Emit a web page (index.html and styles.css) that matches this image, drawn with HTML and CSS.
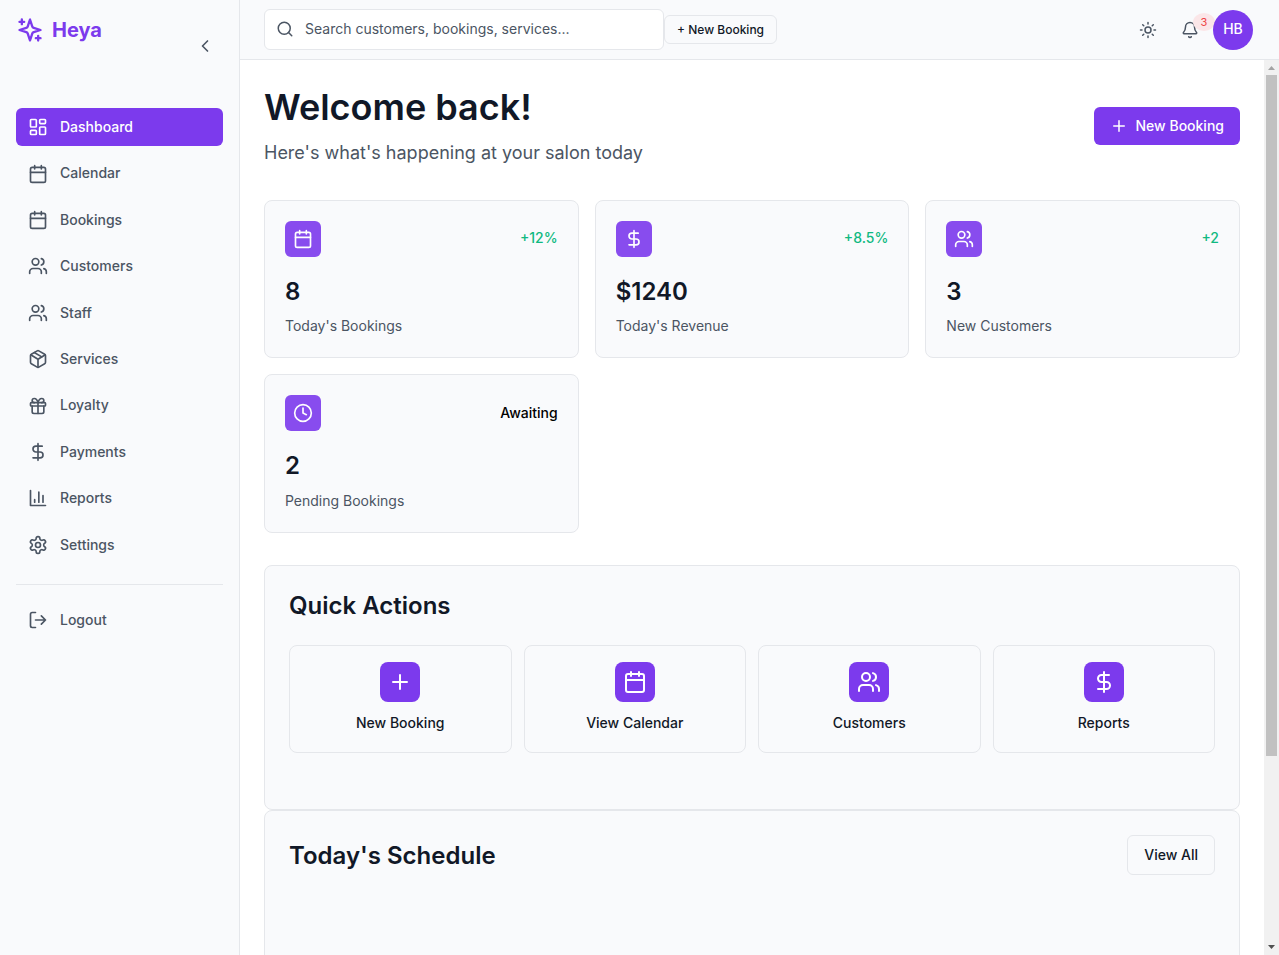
FILE: index.html
```
<!DOCTYPE html>
<html lang="en">
<head>
<meta charset="utf-8">
<title>Heya - Dashboard</title>
<link rel="stylesheet" href="styles.css">
</head>
<body>
<svg class="sprite" aria-hidden="true">
  <symbol id="sparkles" viewBox="0 0 24 24"><path d="m12 3-1.912 5.813a2 2 0 0 1-1.275 1.275L3 12l5.813 1.912a2 2 0 0 1 1.275 1.275L12 21l1.912-5.813a2 2 0 0 1 1.275-1.275L21 12l-5.813-1.912a2 2 0 0 1-1.275-1.275L12 3Z"/><path d="M5 3v4M19 17v4M3 5h4M17 19h4"/></symbol>
  <symbol id="chevron" viewBox="0 0 24 24"><path d="m15 18-6-6 6-6"/></symbol>
  <symbol id="dashboard" viewBox="0 0 24 24"><rect width="7" height="9" x="3" y="3" rx="1"/><rect width="7" height="5" x="14" y="3" rx="1"/><rect width="7" height="9" x="14" y="12" rx="1"/><rect width="7" height="5" x="3" y="16" rx="1"/></symbol>
  <symbol id="calendar" viewBox="0 0 24 24"><path d="M8 2v4M16 2v4"/><rect width="18" height="18" x="3" y="4" rx="2"/><path d="M3 10h18"/></symbol>
  <symbol id="users" viewBox="0 0 24 24"><path d="M16 21v-2a4 4 0 0 0-4-4H6a4 4 0 0 0-4 4v2"/><circle cx="9" cy="7" r="4"/><path d="M22 21v-2a4 4 0 0 0-3-3.87M16 3.13a4 4 0 0 1 0 7.75"/></symbol>
  <symbol id="package" viewBox="0 0 24 24"><path d="M11 21.73a2 2 0 0 0 2 0l7-4A2 2 0 0 0 21 16V8a2 2 0 0 0-1-1.73l-7-4a2 2 0 0 0-2 0l-7 4A2 2 0 0 0 3 8v8a2 2 0 0 0 1 1.73z"/><path d="M12 22V12"/><path d="m3.3 7 7.703 4.734a2 2 0 0 0 1.994 0L20.7 7"/><path d="m7.5 4.27 9 5.15"/></symbol>
  <symbol id="gift" viewBox="0 0 24 24"><rect x="3" y="8" width="18" height="4" rx="1"/><path d="M12 8v13"/><path d="M19 12v7a2 2 0 0 1-2 2H7a2 2 0 0 1-2-2v-7"/><path d="M7.5 8a2.5 2.5 0 0 1 0-5A4.8 8 0 0 1 12 8a4.8 8 0 0 1 4.5-5 2.5 2.5 0 0 1 0 5"/></symbol>
  <symbol id="dollar" viewBox="0 0 24 24"><path d="M12 2v20M17 5H9.500a3.500 3.500 0 0 0 0 7h5a3.500 3.500 0 0 1 0 7H6"/></symbol>
  <symbol id="chart" viewBox="0 0 24 24"><path d="M3 3v18h18M18 17V9M13 17V5M8 17v-3"/></symbol>
  <symbol id="settings" viewBox="0 0 24 24"><path d="M12.22 2h-.44a2 2 0 0 0-2 2v.18a2 2 0 0 1-1 1.73l-.43.25a2 2 0 0 1-2 0l-.15-.08a2 2 0 0 0-2.73.73l-.22.38a2 2 0 0 0 .73 2.73l.15.1a2 2 0 0 1 1 1.72v.51a2 2 0 0 1-1 1.74l-.15.09a2 2 0 0 0-.73 2.73l.22.38a2 2 0 0 0 2.73.73l.15-.08a2 2 0 0 1 2 0l.43.25a2 2 0 0 1 1 1.73V20a2 2 0 0 0 2 2h.44a2 2 0 0 0 2-2v-.18a2 2 0 0 1 1-1.73l.43-.25a2 2 0 0 1 2 0l.15.08a2 2 0 0 0 2.73-.73l.22-.39a2 2 0 0 0-.73-2.73l-.15-.08a2 2 0 0 1-1-1.74v-.5a2 2 0 0 1 1-1.74l.15-.09a2 2 0 0 0 .73-2.73l-.22-.38a2 2 0 0 0-2.73-.73l-.15.08a2 2 0 0 1-2 0l-.43-.25a2 2 0 0 1-1-1.73V4a2 2 0 0 0-2-2z"/><circle cx="12" cy="12" r="3"/></symbol>
  <symbol id="logout" viewBox="0 0 24 24"><path d="M9 21H5a2 2 0 0 1-2-2V5a2 2 0 0 1 2-2h4M16 17l5-5-5-5M21 12H9"/></symbol>
  <symbol id="search" viewBox="0 0 24 24"><circle cx="11" cy="11" r="8"/><path d="m21 21-4.3-4.3"/></symbol>
  <symbol id="sun" viewBox="0 0 24 24"><circle cx="12" cy="12" r="4"/><path d="M12 2v2M12 20v2M4.930 4.930l1.410 1.410M17.660 17.660l1.410 1.410M2 12h2M20 12h2M6.340 17.660l-1.410 1.410M19.070 4.930l-1.410 1.410"/></symbol>
  <symbol id="bell" viewBox="0 0 24 24"><path d="M10.268 21a2 2 0 0 0 3.464 0"/><path d="M3.262 15.326A1 1 0 0 0 4 17h16a1 1 0 0 0 .74-1.673C19.410 13.956 18 12.499 18 8A6 6 0 0 0 6 8c0 4.499-1.411 5.956-2.738 7.326"/></symbol>
  <symbol id="plus" viewBox="0 0 24 24"><path d="M5 12h14M12 5v14"/></symbol>
  <symbol id="clock" viewBox="0 0 24 24"><circle cx="12" cy="12" r="10"/><path d="M12 6v6l4 2"/></symbol>
</svg>

<div class="app">
  <aside class="sidebar">
    <div class="sidebar-head">
      <div class="logo"><svg class="icon logo-icon"><use href="#sparkles"/></svg><span>Heya</span></div>
      <button class="collapse" aria-label="Collapse"><svg class="icon"><use href="#chevron"/></svg></button>
    </div>
    <nav class="nav">
      <a class="nav-item active"><svg class="icon"><use href="#dashboard"/></svg>Dashboard</a>
      <a class="nav-item"><svg class="icon"><use href="#calendar"/></svg>Calendar</a>
      <a class="nav-item"><svg class="icon"><use href="#calendar"/></svg>Bookings</a>
      <a class="nav-item"><svg class="icon"><use href="#users"/></svg>Customers</a>
      <a class="nav-item"><svg class="icon"><use href="#users"/></svg>Staff</a>
      <a class="nav-item"><svg class="icon"><use href="#package"/></svg>Services</a>
      <a class="nav-item"><svg class="icon"><use href="#gift"/></svg>Loyalty</a>
      <a class="nav-item"><svg class="icon"><use href="#dollar"/></svg>Payments</a>
      <a class="nav-item"><svg class="icon"><use href="#chart"/></svg>Reports</a>
      <a class="nav-item"><svg class="icon"><use href="#settings"/></svg>Settings</a>
    </nav>
    <div class="nav-foot">
      <a class="nav-item"><svg class="icon"><use href="#logout"/></svg>Logout</a>
    </div>
  </aside>

  <div class="page">
    <header class="topbar">
      <div class="search"><svg class="icon"><use href="#search"/></svg><span>Search customers, bookings, services...</span></div>
      <button class="btn-small">+ New Booking</button>
      <div class="tools">
        <button class="tool" aria-label="Theme"><svg class="icon"><use href="#sun"/></svg></button>
        <button class="tool" aria-label="Notifications"><svg class="icon"><use href="#bell"/></svg><span class="badge">3</span></button>
        <div class="avatar">HB</div>
      </div>
    </header>

    <div class="body">
      <main class="content">
        <div class="hero">
          <div>
            <h1>Welcome back!</h1>
            <p class="subtitle">Here's what's happening at your salon today</p>
          </div>
          <button class="btn-primary"><svg class="icon"><use href="#plus"/></svg>New Booking</button>
        </div>

        <div class="stats">
          <div class="stat">
            <div class="stat-top"><span class="stat-icon"><svg class="icon"><use href="#calendar"/></svg></span><span class="change up">+12%</span></div>
            <div class="value">8</div><div class="label">Today's Bookings</div>
          </div>
          <div class="stat">
            <div class="stat-top"><span class="stat-icon"><svg class="icon"><use href="#dollar"/></svg></span><span class="change up">+8.5%</span></div>
            <div class="value">$1240</div><div class="label">Today's Revenue</div>
          </div>
          <div class="stat">
            <div class="stat-top"><span class="stat-icon"><svg class="icon"><use href="#users"/></svg></span><span class="change up">+2</span></div>
            <div class="value">3</div><div class="label">New Customers</div>
          </div>
          <div class="stat">
            <div class="stat-top"><span class="stat-icon"><svg class="icon"><use href="#clock"/></svg></span><span class="change">Awaiting</span></div>
            <div class="value">2</div><div class="label">Pending Bookings</div>
          </div>
        </div>

        <section class="panel quick">
          <h2>Quick Actions</h2>
          <div class="actions">
            <a class="action"><span class="action-icon"><svg class="icon"><use href="#plus"/></svg></span>New Booking</a>
            <a class="action"><span class="action-icon"><svg class="icon"><use href="#calendar"/></svg></span>View Calendar</a>
            <a class="action"><span class="action-icon"><svg class="icon"><use href="#users"/></svg></span>Customers</a>
            <a class="action"><span class="action-icon"><svg class="icon"><use href="#dollar"/></svg></span>Reports</a>
          </div>
        </section>

        <section class="panel schedule">
          <div class="panel-head">
            <h2>Today's Schedule</h2>
            <button class="btn-outline">View All</button>
          </div>
        </section>
      </main>
      <div class="scrollbar" aria-hidden="true">
        <svg class="arrow" viewBox="0 0 15 15"><path fill="#a3a3a3" d="M4 10h7L7.500 6z"/></svg>
        <div class="thumb"></div>
        <svg class="arrow" viewBox="0 0 15 15"><path fill="#505050" d="M4 5h7L7.500 9z"/></svg>
      </div>
    </div>
  </div>
</div>
</body>
</html>
```
FILE: styles.css
```
* { box-sizing: border-box; margin: 0; padding: 0; }
body {
  font-family: Inter, "Liberation Sans", sans-serif;
  font-size: 14px;
  line-height: 1.6;
  color: #111827;
  background: #fff;
  overflow: hidden;
}
button { font: inherit; color: inherit; background: none; border: 0; }
.sprite { display: none; }
.icon {
  display: block;
  flex: none;
  width: 20px;
  height: 20px;
  fill: none;
  stroke: currentColor;
  stroke-width: 2;
  stroke-linecap: round;
  stroke-linejoin: round;
}

.app { display: flex; height: 955px; }

/* Sidebar */
.sidebar {
  flex: none;
  width: 240px;
  padding: 0 16px;
  background: #f9fafc;
  border-right: 1px solid #e5e7eb;
  color: #4b5563;
}
.sidebar-head {
  display: flex;
  align-items: flex-start;
  justify-content: space-between;
  height: 108px;
  padding-top: 14px;
}
.logo {
  display: flex;
  align-items: center;
  gap: 8px;
  font-size: 20px;
  font-weight: 700;
  color: #7c3aed;
}
.logo-icon { width: 28px; height: 28px; }
.collapse { padding: 8px; margin-top: 14px; }
.nav { display: flex; flex-direction: column; gap: 8px; }
.nav-item {
  display: flex;
  align-items: center;
  gap: 12px;
  padding: 8px 12px;
  border-radius: 6px;
  font-weight: 500;
}
.nav-item.active { background: #7c3aed; color: #fff; }
.nav-foot {
  margin-top: 20px;
  padding-top: 16px;
  border-top: 1px solid #e5e7eb;
}

/* Top bar */
.page { flex: 1; min-width: 0; display: flex; flex-direction: column; }
.topbar {
  display: flex;
  align-items: center;
  flex: none;
  height: 60px;
  padding: 0 26px 0 24px;
  background: #f9fafc;
  border-bottom: 1px solid #e5e7eb;
}
.search {
  display: flex;
  align-items: center;
  gap: 11px;
  width: 400px;
  height: 40.4px;
  padding: 0 11px;
  background: #fff;
  border: 1px solid #e5e7eb;
  border-radius: 6px;
  color: #4b5563;
}
.search .icon { width: 18px; height: 18px; }
.btn-small {
  height: 29px;
  padding: 0 12px;
  border: 1px solid #e5e7eb;
  border-radius: 6px;
  font-size: 12px;
  font-weight: 500;
}
.tools { display: flex; align-items: center; margin-left: auto; color: #4b5563; }
.tool { position: relative; width: 42px; padding: 12px; }
.tool .icon { width: 18px; height: 18px; }
.badge {
  position: absolute;
  top: 4px;
  right: -4px;
  width: 22px;
  height: 18px;
  border-radius: 50%;
  background: #fbe6e8;
  color: #ef4444;
  font-size: 11px;
  line-height: 18px;
  text-align: center;
}
.avatar {
  position: relative;
  display: flex;
  align-items: center;
  justify-content: center;
  width: 40px;
  height: 40px;
  margin-left: 2px;
  border-radius: 50%;
  background: #7c3aed;
  color: #fff;
  font-weight: 500;
}

/* Content */
.body { flex: 1; min-height: 0; display: flex; }
.content { flex: 1; min-width: 0; padding: 24px 24px 0; overflow: hidden; }
.hero { display: flex; align-items: center; justify-content: space-between; margin-bottom: 32px; }
h1 { margin-bottom: 8px; font-size: 36px; font-weight: 600; line-height: 1.3; }
h2 { font-size: 24px; font-weight: 600; line-height: 1.3; }
.subtitle { font-size: 18px; color: #4b5563; }
.btn-primary {
  display: flex;
  align-items: center;
  gap: 8px;
  padding: 8px 16px;
  border-radius: 6px;
  background: #7c3aed;
  color: #fff;
  font-weight: 500;
}
.btn-primary .icon { width: 18px; height: 18px; }

.stats { display: grid; grid-template-columns: repeat(3, 1fr); gap: 16px; margin-bottom: 32px; }
.stat { padding: 20px; border: 1px solid #e5e7eb; border-radius: 8px; background: #f9fafc; }
.stat-top { display: flex; justify-content: space-between; align-items: center; height: 36px; margin-bottom: 16px; }
.stat-icon {
  display: flex;
  align-items: center;
  justify-content: center;
  width: 36px;
  height: 36px;
  border-radius: 6px;
  background: #7c3aed;
  color: #fff;
  opacity: 0.9;
}
.change { font-weight: 500; color: #000; }
.change.up { color: #10b981; }
.value { margin-bottom: 4px; font-size: 24px; font-weight: 600; }
.label { color: #4b5563; }

.panel { border: 1px solid #e5e7eb; border-radius: 8px; padding: 24px; background: #f9fafc; }
.quick { height: 245px; }
.schedule { height: 300px; }
.actions { display: grid; grid-template-columns: repeat(4, 1fr); gap: 12px; margin-top: 24px; }
.action {
  display: flex;
  flex-direction: column;
  align-items: center;
  gap: 10px;
  height: 107.6px;
  padding: 16px;
  border: 1px solid #e5e7eb;
  border-radius: 8px;
  font-weight: 500;
}
.action-icon {
  display: flex;
  align-items: center;
  justify-content: center;
  width: 40px;
  height: 40px;
  border-radius: 8px;
  background: #7c3aed;
  color: #fff;
}
.action-icon .icon { width: 24px; height: 24px; }
.panel-head { display: flex; align-items: center; justify-content: space-between; }
.btn-outline {
  height: 40px;
  padding: 0 16px;
  border: 1px solid #e5e7eb;
  border-radius: 6px;
  font-weight: 500;
}

/* Scroll track */
.scrollbar { flex: none; display: flex; flex-direction: column; width: 15px; background: #f1f1f1; }
.arrow { width: 15px; height: 15px; }
.thumb { height: 681px; margin: 0 2px auto; background: #c1c1c1; }
```
